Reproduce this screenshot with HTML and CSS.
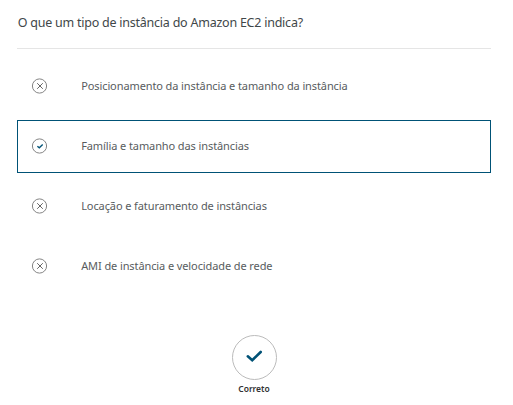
FILE: index.html
```html
<!DOCTYPE html>
<html lang="pt-BR">
<head>
<meta charset="utf-8">
<title>Amazon EC2</title>
<link rel="stylesheet" href="styles.css">
</head>
<body>
<main class="quiz">
  <h1 class="question">O que um tipo de instância do Amazon EC2 indica?</h1>
  <ul class="options">
    <li class="option">
      <svg class="mark" viewBox="0 0 17 16"><circle cx="8.5" cy="8" r="7.1"/><path class="cross" d="M6.2 5.2l5.6 5.6M11.8 5.2l-5.6 5.6"/></svg>
      <span class="label">Posicionamento da instância e tamanho da instância</span>
    </li>
    <li class="option selected">
      <svg class="mark" viewBox="0 0 17 16"><circle cx="8.5" cy="8" r="7.1"/><path class="tick" d="M6.4 8.2l1.9 1.6 3.4-3.2"/></svg>
      <span class="label">Família e tamanho das instâncias</span>
    </li>
    <li class="option">
      <svg class="mark" viewBox="0 0 17 16"><circle cx="8.5" cy="8" r="7.1"/><path class="cross" d="M6.2 5.2l5.6 5.6M11.8 5.2l-5.6 5.6"/></svg>
      <span class="label">Locação e faturamento de instâncias</span>
    </li>
    <li class="option">
      <svg class="mark" viewBox="0 0 17 16"><circle cx="8.5" cy="8" r="7.1"/><path class="cross" d="M6.2 5.2l5.6 5.6M11.8 5.2l-5.6 5.6"/></svg>
      <span class="label">AMI de instância e velocidade de rede</span>
    </li>
  </ul>
  <div class="result">
    <svg class="badge" viewBox="0 0 45 45"><circle cx="22.5" cy="22.5" r="22"/><path d="M15.8 21.3l4.4 4 8.5-8.3"/></svg>
    <span class="result-text">Correto</span>
  </div>
</main>
</body>
</html>
```
FILE: styles.css
```css
* { box-sizing: border-box; }
body { margin: 0; background: #fff; color: #414749; font-family: "Noto Sans", sans-serif; }
.quiz { width: 491px; padding-left: 17px; }
.question { margin: 0; height: 49px; padding: 13px 0 0 0.7px; border-bottom: 1px solid #e5e5e5; font-size: 12.5px; line-height: 20px; font-weight: 400; letter-spacing: -0.235px; white-space: nowrap; }
.options { list-style: none; margin: 11px 0 0; padding: 0; display: grid; gap: 7px; }
.option { height: 53px; display: flex; align-items: center; gap: 33.2px; padding: 0 0 1px 13px; border: 1px solid transparent; }
.selected { border-color: #005276; }
.mark { width: 17px; height: 16px; fill: none; stroke: #858585; stroke-width: 1; }
.mark .cross { stroke: #666; }
.mark .tick { stroke: #005276; stroke-width: 1.4; }
.label { font-size: 11px; line-height: 18px; letter-spacing: -0.1px; color: #585c5e; white-space: nowrap; }
.result { margin-top: 42px; padding-left: 1px; display: flex; flex-direction: column; align-items: center; }
.badge { width: 45px; height: 45px; fill: none; stroke: #bbb; stroke-width: 1; }
.badge path { stroke: #005276; stroke-width: 2.6; stroke-linecap: round; }
.result-text { margin-top: 1px; padding-right: 1px; font-size: 8.5px; line-height: 16px; font-weight: 600; color: #333; }
```
